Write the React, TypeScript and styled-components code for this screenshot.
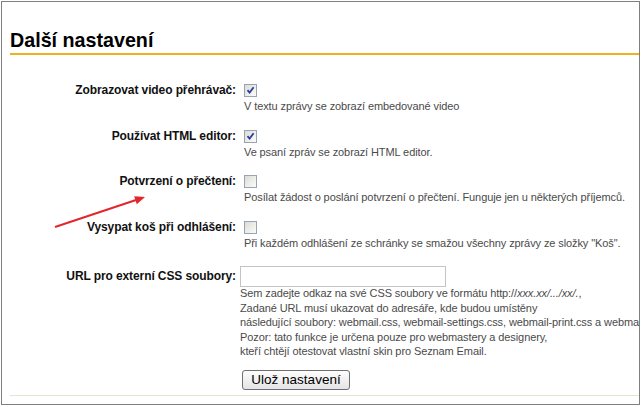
import styled, { createGlobalStyle } from "styled-components";

const GlobalStyle = createGlobalStyle`
  body {
    margin: 0;
    background: #fff;
    font-family: "Liberation Sans", Arial, sans-serif;
  }
`;

type Setting = {
  label: string;
  checked: boolean;
  hint: string;
};

const settings: Setting[] = [
  {
    label: "Zobrazovat video přehrávač:",
    checked: true,
    hint: "V textu zprávy se zobrazí embedované video",
  },
  {
    label: "Používat HTML editor:",
    checked: true,
    hint: "Ve psaní zpráv se zobrazí HTML editor.",
  },
  {
    label: "Potvrzení o přečtení:",
    checked: false,
    hint: "Posílat žádost o poslání potvrzení o přečtení. Funguje jen u některých příjemců.",
  },
  {
    label: "Vysypat koš při odhlášení:",
    checked: false,
    hint: "Při každém odhlášení ze schránky se smažou všechny zprávy ze složky \"Koš\".",
  },
];

function CheckBox({ checked }: { checked: boolean }) {
  return (
    <Box>
      {checked && (
        <svg width="9" height="9" viewBox="0 0 9 9">
          <path d="M1.5 4.2 L3.6 6.6 L7.6 1.2" fill="none" stroke="#2a3f9c" strokeWidth="1.8" />
        </svg>
      )}
    </Box>
  );
}

export default function App() {
  return (
    <>
      <GlobalStyle />
      <Frame>
        <Heading>Další nastavení</Heading>
        <Form>
          {settings.map((s) => (
            <Row key={s.label}>
              <Label>{s.label}</Label>
              <Control $indent>
                <CheckBox checked={s.checked} />
                <Hint>{s.hint}</Hint>
              </Control>
            </Row>
          ))}
          <Row>
            <Label $tall>URL pro externí CSS soubory:</Label>
            <Control>
              <UrlInput type="text" />
              <Hint $tight>
                <Line>
                  Sem zadejte odkaz na své CSS soubory ve formátu http://<i>xxx.xx/.../xx/.</i>,
                </Line>
                <Line>Zadané URL musí ukazovat do adresáře, kde budou umístěny</Line>
                <Line>
                  následující soubory: webmail.css, webmail-settings.css, webmail-print.css a webmail-ie.css.
                </Line>
                <Line>Pozor: tato funkce je určena pouze pro webmastery a designery,</Line>
                <Line>kteří chtějí otestovat vlastní skin pro Seznam Email.</Line>
              </Hint>
              <SaveButton type="button">Ulož nastavení</SaveButton>
            </Control>
          </Row>
        </Form>
        <Footer />
        <Arrow width="100" height="42" viewBox="0 0 100 42">
          <line x1="5" y1="35" x2="86" y2="8" stroke="#e3262a" strokeWidth="2" />
          <polygon points="95,5 86.8,12.2 84.2,4.2" fill="#e3262a" />
        </Arrow>
      </Frame>
    </>
  );
}

const Frame = styled.div`
  position: relative;
  box-sizing: border-box;
  margin: 1px 0 0 1px;
  width: 639px;
  height: 404px;
  border: 1px solid #7f7f7f;
  overflow: hidden;
`;

const Heading = styled.h2`
  margin: 0 0 0 8px;
  padding: 27px 0 1px;
  font-size: 19.7px;
  line-height: 23px;
  font-weight: bold;
  color: #000;
  border-bottom: 2px solid #efb21e;
`;

const Form = styled.div`
  display: flex;
  flex-direction: column;
  gap: 16px;
  padding-top: 29px;
`;

const Row = styled.div`
  display: grid;
  grid-template-columns: 234px 1fr;
  column-gap: 4px;
  align-items: start;
`;

const Label = styled.div<{ $tall?: boolean }>`
  text-align: right;
  font-size: 12px;
  letter-spacing: -0.1px;
  font-weight: bold;
  color: #111;
  line-height: ${(p) => (p.$tall ? "21px" : "15px")};
  margin-top: ${(p) => (p.$tall ? "0" : "-1px")};
  white-space: nowrap;
`;

const Control = styled.div<{ $indent?: boolean }>`
  display: flex;
  flex-direction: column;
  align-items: flex-start;
  padding-left: ${(p) => (p.$indent ? "4px" : "0")};
  min-width: 0;
`;

const Box = styled.span`
  box-sizing: border-box;
  display: flex;
  align-items: center;
  justify-content: center;
  width: 13px;
  height: 13px;
  border: 1px solid #9aa3b5;
  background: linear-gradient(135deg, #dcdcd6, #fbfbf9);
`;

const Hint = styled.div<{ $tight?: boolean }>`
  margin-top: ${(p) => (p.$tight ? "-1px" : "2px")};
  font-size: 11px;
  letter-spacing: -0.1px;
  line-height: 14.5px;
  color: #4a4a4a;
  white-space: nowrap;
`;

const Line = styled.div``;

const UrlInput = styled.input`
  box-sizing: border-box;
  width: 206px;
  height: 21px;
  margin: 0;
  border: 1px solid #c4c4c4;
  padding: 0 3px;
  font-family: inherit;
`;

const SaveButton = styled.button`
  margin: 11px 0 0 2px;
  width: 108px;
  height: 20px;
  padding: 0;
  font-family: "Liberation Sans", Arial, sans-serif;
  font-size: 13.5px;
  color: #000;
  border: 1px solid #6f6f6f;
  border-radius: 3px;
  background: linear-gradient(#fdfdfd, #e4e4e4);
`;

const Footer = styled.div`
  margin: 5px 0 0 8px;
  border-top: 1px solid #e8e4cc;
`;

const Arrow = styled.svg`
  position: absolute;
  left: 48px;
  top: 190px;
`;
